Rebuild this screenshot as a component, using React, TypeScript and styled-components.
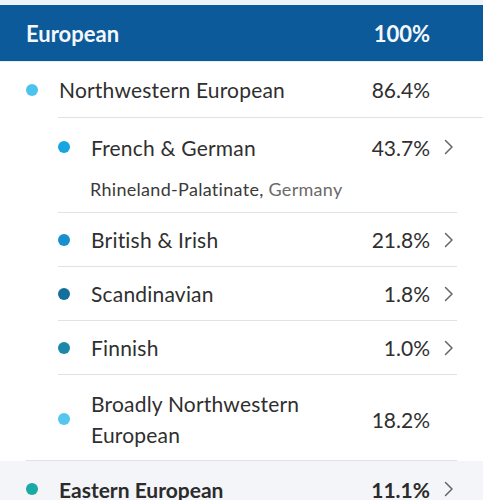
import React from 'react';
import styled, { createGlobalStyle } from 'styled-components';

const GlobalStyle = createGlobalStyle`
  html, body {
    margin: 0;
    padding: 0;
    background: #ffffff;
  }
  body {
    font-family: Lato, "Open Sans", sans-serif;
    color: #333333;
  }
`;

type Region = {
  name: string;
  percent: string;
  color: string;
  more?: boolean;
  place?: string;
  country?: string;
};

const subRegions: Region[] = [
  {
    name: 'French & German',
    percent: '43.7%',
    color: '#16a5e2',
    more: true,
    place: 'Rhineland-Palatinate',
    country: 'Germany',
  },
  { name: 'British & Irish', percent: '21.8%', color: '#1791cc', more: true },
  { name: 'Scandinavian', percent: '1.8%', color: '#156f9c', more: true },
  { name: 'Finnish', percent: '1.0%', color: '#1a88a8', more: true },
  { name: 'Broadly Northwestern European', percent: '18.2%', color: '#55c6ef' },
];

const Chevron: React.FC<{ show?: boolean }> = ({ show }) => (
  <ChevronSlot>
    {show && (
      <svg width="10" height="16" viewBox="0 0 10 16" fill="none">
        <path
          d="M1.5 1.5L8 8L1.5 14.5"
          stroke="#666666"
          strokeWidth="1.5"
          strokeLinecap="round"
          strokeLinejoin="round"
        />
      </svg>
    )}
  </ChevronSlot>
);

const App: React.FC = () => {
  return (
    <>
      <GlobalStyle />
      <Page>
        <TopStrip />
        <Header>
          <span>European</span>
          <span>100%</span>
        </Header>

        <Section>
          <MainRow>
            <Dot color="#4cc3ee" />
            <Label>Northwestern European</Label>
            <Value>86.4%</Value>
            <Chevron />
          </MainRow>

          <SubList>
            {subRegions.map((r) => {
              const wide = r.name.length > 20;
              return (
                <SubItem key={r.name} $last={!r.more}>
                  <SubRow $wide={wide} $tall={!!r.place}>
                    <Dot color={r.color} />
                    <Label>
                      {wide ? (
                        <>
                          Broadly Northwestern
                          <br />
                          European
                        </>
                      ) : (
                        r.name
                      )}
                    </Label>
                    <Value>{r.percent}</Value>
                    <Chevron show={r.more} />
                  </SubRow>
                  {r.place && (
                    <Place>
                      {r.place}, <span>{r.country}</span>
                    </Place>
                  )}
                </SubItem>
              );
            })}
          </SubList>
        </Section>

        <FooterRow>
          <Dot color="#19aaa6" />
          <BoldLabel>Eastern European</BoldLabel>
          <BoldValue>11.1%</BoldValue>
          <Chevron show />
        </FooterRow>
      </Page>
    </>
  );
};

const Page = styled.div`
  width: 483px;
  height: 500px;
  overflow: hidden;
  background: #ffffff;
`;

const TopStrip = styled.div`
  height: 5px;
  background: #eef3f8;
`;

const Header = styled.div`
  height: 56px;
  background: #0c5a99;
  display: flex;
  align-items: center;
  justify-content: space-between;
  padding: 0 53px 0 26px;
  color: #f4f8fc;
  font-size: 22px;
  font-weight: 700;
  border-bottom: 1px solid #e8edf2;
`;

const Section = styled.div`
  &::after {
    content: '';
    display: block;
    height: 1px;
    margin: 0 26px;
    background: #e2e2e2;
  }
`;

const MainRow = styled.div`
  display: flex;
  align-items: center;
  height: 55px;
  padding: 0 26px;
`;

const Dot = styled.span<{ color: string }>`
  flex: none;
  width: 12px;
  height: 12px;
  border-radius: 50%;
  background: ${(p) => p.color};
  margin-right: 21px;
`;

const Label = styled.span`
  flex: 1;
  font-size: 21px;
  line-height: 31px;
  letter-spacing: 0.2px;
  color: #2f2f2f;
`;

const Value = styled.span`
  font-size: 21px;
  color: #2f2f2f;
  text-align: right;
`;

const ChevronSlot = styled.span`
  flex: none;
  width: 27px;
  display: flex;
  align-items: center;
  padding-left: 14px;
  box-sizing: border-box;
`;

const SubList = styled.div`
  margin-left: 58px;
  border-top: 1px solid #e2e2e2;
`;

const SubItem = styled.div<{ $last?: boolean }>`
  margin-right: 26px;
  border-bottom: ${(p) => (p.$last ? 'none' : '1px solid #e2e2e2')};
`;

const SubRow = styled.div<{ $wide?: boolean; $tall?: boolean }>`
  display: flex;
  align-items: center;
  min-height: ${(p) => (p.$tall ? '58px' : '53px')};
  padding: ${(p) => (p.$wide ? '13px 0 10px' : '0')};
  box-sizing: border-box;
`;

const Place = styled.div`
  margin-top: 2px;
  padding: 0 0 12px 32px;
  font-size: 18px;
  line-height: 22px;
  letter-spacing: 0.3px;
  color: #3a3a3a;

  span {
    color: #6a6a6a;
  }
`;

const FooterRow = styled.div`
  display: flex;
  align-items: center;
  height: 56px;
  padding: 0 26px;
  background: #f3f5f8;
`;

const BoldLabel = styled(Label)`
  font-weight: 700;
  letter-spacing: 0;
  color: #2b2b2b;
`;

const BoldValue = styled(Value)`
  font-weight: 700;
  color: #2b2b2b;
`;

export default App;
